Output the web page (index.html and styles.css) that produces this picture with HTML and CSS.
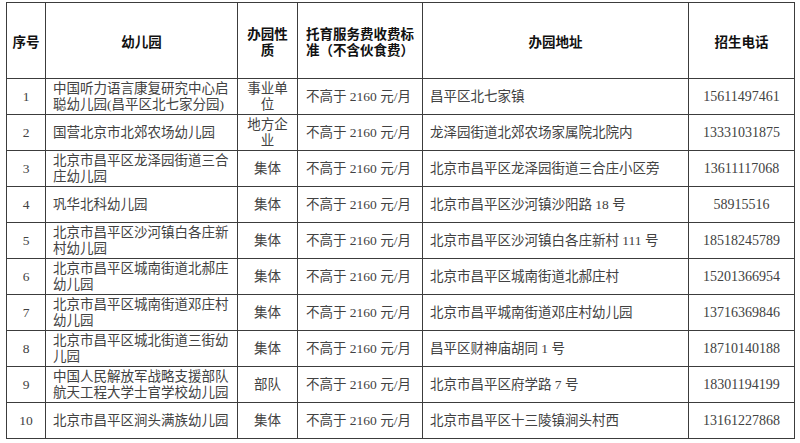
FILE: index.html
```html
<!DOCTYPE html>
<html lang="zh-CN">
<head>
<meta charset="utf-8">
<link rel="stylesheet" href="styles.css">
</head>
<body>
<table class="kg">
  <colgroup>
    <col class="c-no"><col class="c-name"><col class="c-type"><col class="c-fee"><col class="c-addr"><col class="c-tel">
  </colgroup>
  <thead>
    <tr>
      <th>序号</th>
      <th>幼儿园</th>
      <th class="type">办园性质</th>
      <th class="left">托育服务费收费标准（不含伙食费）</th>
      <th>办园地址</th>
      <th>招生电话</th>
    </tr>
  </thead>
  <tbody>
    <tr><td class="num">1</td><td>中国听力语言康复研究中心启<br><span class="nw">聪幼儿园(昌平区北七家分园)</span></td><td class="mid">事业单位</td><td class="fee">不高于 2160 元/月</td><td>昌平区北七家镇</td><td class="tel">15611497461</td></tr>
    <tr><td class="num">2</td><td>国营北京市北郊农场幼儿园</td><td class="mid">地方企业</td><td class="fee">不高于 2160 元/月</td><td>龙泽园街道北郊农场家属院北院内</td><td class="tel">13331031875</td></tr>
    <tr><td class="num">3</td><td>北京市昌平区龙泽园街道三合庄幼儿园</td><td class="mid">集体</td><td class="fee">不高于 2160 元/月</td><td>北京市昌平区龙泽园街道三合庄小区旁</td><td class="tel">13611117068</td></tr>
    <tr><td class="num">4</td><td>巩华北科幼儿园</td><td class="mid">集体</td><td class="fee">不高于 2160 元/月</td><td>北京市昌平区沙河镇沙阳路 18 号</td><td class="tel">58915516</td></tr>
    <tr><td class="num">5</td><td>北京市昌平区沙河镇白各庄新村幼儿园</td><td class="mid">集体</td><td class="fee">不高于 2160 元/月</td><td>北京市昌平区沙河镇白各庄新村 111 号</td><td class="tel">18518245789</td></tr>
    <tr><td class="num">6</td><td>北京市昌平区城南街道北郝庄幼儿园</td><td class="mid">集体</td><td class="fee">不高于 2160 元/月</td><td>北京市昌平区城南街道北郝庄村</td><td class="tel">15201366954</td></tr>
    <tr><td class="num">7</td><td>北京市昌平区城南街道邓庄村幼儿园</td><td class="mid">集体</td><td class="fee">不高于 2160 元/月</td><td>北京市昌平城南街道邓庄村幼儿园</td><td class="tel">13716369846</td></tr>
    <tr><td class="num">8</td><td>北京市昌平区城北街道三街幼儿园</td><td class="mid">集体</td><td class="fee">不高于 2160 元/月</td><td>昌平区财神庙胡同 1 号</td><td class="tel">18710140188</td></tr>
    <tr><td class="num">9</td><td>中国人民解放军战略支援部队航天工程大学士官学校幼儿园</td><td class="mid">部队</td><td class="fee">不高于 2160 元/月</td><td>北京市昌平区府学路 7 号</td><td class="tel">18301194199</td></tr>
    <tr><td class="num">10</td><td>北京市昌平区涧头满族幼儿园</td><td class="mid">集体</td><td class="fee">不高于 2160 元/月</td><td>北京市昌平区十三陵镇涧头村西</td><td class="tel">13161227868</td></tr>
  </tbody>
</table>
</body>
</html>
```

FILE: styles.css
```css
html, body {
  margin: 0;
  padding: 0;
  background: #ffffff;
}

body {
  padding: 2px 0 0 6px;
}

.kg {
  border-collapse: collapse;
  table-layout: fixed;
  width: 788px;
  font-family: "Liberation Serif", "Noto Sans CJK SC", serif;
  font-size: 13.5px;
  line-height: 16px;
  color: #424242;
}

.c-no { width: 39px; }
.c-name { width: 192px; }
.c-type { width: 60px; }
.c-fee { width: 125px; }
.c-addr { width: 266px; }
.c-tel { width: 106px; }

.kg th,
.kg td {
  border: 1px solid #3c3c3c;
  vertical-align: middle;
  padding: 0 7px;
  overflow: hidden;
}

.kg th {
  height: 75px;
  font-family: "Noto Sans CJK SC", sans-serif;
  font-weight: 700;
  color: #111111;
  text-align: center;
  padding: 0 2px;
  white-space: nowrap;
}

.kg th.type {
  white-space: normal;
  padding: 0 9px;
}

.kg th.left {
  text-align: left;
  white-space: normal;
  padding: 0 6px 0 8px;
}

.kg td {
  height: 35px;
  text-align: left;
}

.kg td.num,
.kg td.mid,
.kg td.tel {
  text-align: center;
}

.kg td.num {
  padding: 0 2px;
}

.kg td.mid {
  padding: 0 9px;
}

.kg td.tel {
  padding: 0 4px;
  font-size: 14px;
}

.kg td.fee {
  padding-left: 8px;
  white-space: nowrap;
}

.nw {
  white-space: nowrap;
}
```
